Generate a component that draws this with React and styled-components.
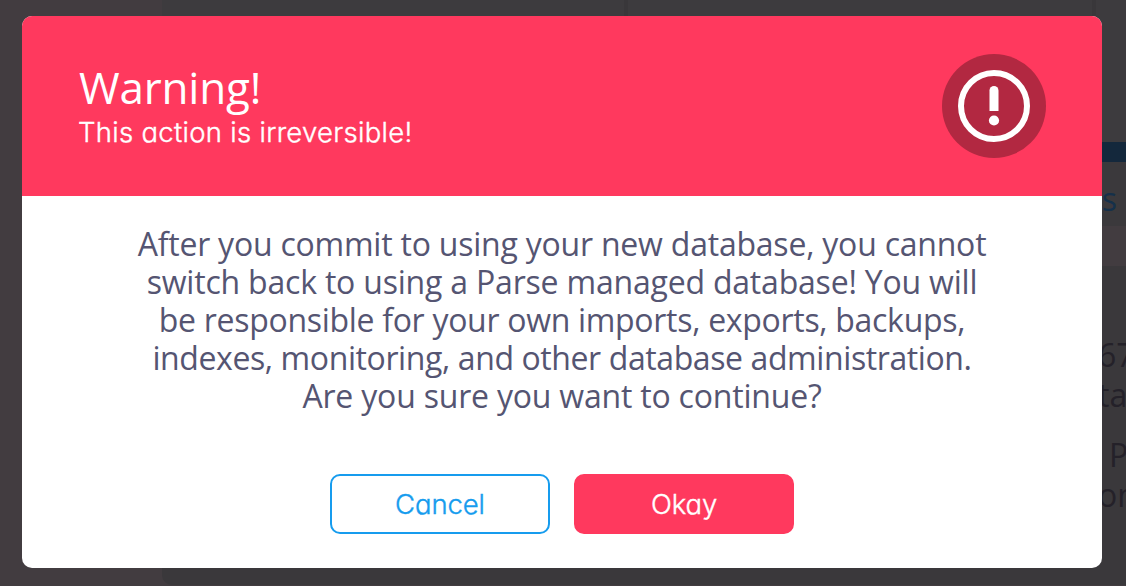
import React from "react";
import styled, { createGlobalStyle } from "styled-components";

const GlobalStyle = createGlobalStyle`
  * { box-sizing: border-box; }
  body { margin: 0; overflow: hidden; }
`;

const Screen = styled.div`
  position: relative;
  width: 1126px;
  height: 586px;
  overflow: hidden;
  font-family: "Open Sans", "Noto Sans", sans-serif;
`;

const Page = styled.div`
  display: flex;
  height: 100%;
  background: #423c40;
`;

const Sidebar = styled.div`
  flex: 0 0 162px;
`;

const Main = styled.div`
  flex: 1;
  display: flex;
  flex-direction: column;
  height: 585px;
  background: #3a383b;
  border-bottom-left-radius: 10px;
  overflow: hidden;
`;

const Columns = styled.div`
  display: flex;
  flex: 0 0 142px;
  background: #3d3b3e;
`;

const Column = styled.div`
  width: ${(p) => p.$width}px;
  border-right: 4px solid #39373a;
`;

const Accent = styled.div`
  flex: 0 0 20px;
  background: #14283c;
`;

const Tab = styled.div`
  flex: 0 0 64px;
  padding: 15px 9px 0 0;
  text-align: right;
  font-size: 32px;
  line-height: 44px;
  color: #15304a;
  background: #3b393c;
`;

const Strip = styled.div`
  flex: 0 0 40px;
  background: #423c40;
`;

const Details = styled.div`
  padding: 69px 0 0 936px;
  font-size: 32px;
  line-height: 40px;
  color: #242129;
  white-space: nowrap;
`;

const Detail = styled.div`
  padding-left: ${(p) => p.$indent || 0}px;
  margin-top: ${(p) => p.$gap || 0}px;
`;

const Dialog = styled.div`
  position: absolute;
  top: 16px;
  left: 22px;
  display: flex;
  flex-direction: column;
  width: 1080px;
  height: 552px;
  border-radius: 10px;
  background: #fff;
  overflow: hidden;
`;

const Header = styled.header`
  display: flex;
  align-items: center;
  justify-content: space-between;
  flex: 0 0 180px;
  padding: 0 56px;
  background: #ff395e;
  color: #fff;
`;

const Title = styled.h1`
  margin: 0;
  padding: 0 0 5px 1px;
  font-size: 44px;
  font-weight: 400;
  line-height: 47px;
  letter-spacing: -0.2px;
`;

const Subtitle = styled.p`
  margin: 0;
  font-family: Inter, sans-serif;
  font-feature-settings: "cv11";
  font-size: 27.5px;
  font-weight: 300;
  line-height: 32px;
  letter-spacing: 0.29px;
  -webkit-text-stroke: 0.4px currentColor;
`;

const Badge = styled.div`
  display: flex;
  align-items: center;
  justify-content: center;
  width: 104px;
  height: 104px;
  border-radius: 50%;
  background: #b22841;
`;

const Message = styled.div`
  padding-top: 29px;
  color: #555572;
  font-size: 32px;
  line-height: 38px;
  text-align: center;
  white-space: nowrap;
`;

const Line = styled.div`
  letter-spacing: ${(p) => p.$track}px;
`;

const Actions = styled.div`
  display: flex;
  justify-content: center;
  gap: 24px;
  margin-top: 59px;
`;

const Button = styled.button`
  width: 220px;
  height: 60px;
  padding: 0;
  border: 2px solid ${(p) => (p.$primary ? "#ff395e" : "#169cee")};
  border-radius: 10px;
  background: ${(p) => (p.$primary ? "#ff395e" : "#fff")};
  color: ${(p) => (p.$primary ? "#fff" : "#169cee")};
  font-family: Inter, sans-serif;
  font-feature-settings: "cv11";
  font-size: 27.5px;
  font-weight: 300;
  letter-spacing: -0.1px;
  -webkit-text-stroke: 0.4px currentColor;
`;

const lines = [
  ["After you commit to using your new database, you cannot", -0.22],
  ["switch back to using a Parse managed database! You will", -0.2],
  ["be responsible for your own imports, exports, backups,", -0.3],
  ["indexes, monitoring, and other database administration.", -0.4],
  ["Are you sure you want to continue?", -0.2],
];

export default function App() {
  return (
    <Screen>
      <GlobalStyle />
      <Page>
        <Sidebar />
        <Main>
          <Columns>
            <Column $width={466} />
            <Column $width={468} />
          </Columns>
          <Accent />
          <Tab>s</Tab>
          <Strip />
          <Details>
            <Detail>67</Detail>
            <Detail>ta</Detail>
            <Detail $gap={20} $indent={11}>P</Detail>
            <Detail>on</Detail>
          </Details>
        </Main>
      </Page>
      <Dialog role="dialog">
        <Header>
          <div>
            <Title>Warning!</Title>
            <Subtitle>This action is irreversible!</Subtitle>
          </div>
          <Badge>
            <svg width="72" height="72" viewBox="0 0 72 72" fill="#fff">
              <circle cx="36" cy="36" r="33" fill="none" stroke="#fff" strokeWidth="6" />
              <path d="M31.5 41V20.5a4.5 4.5 0 0 1 9 0V41z" />
              <circle cx="36" cy="50.5" r="5.1" />
            </svg>
          </Badge>
        </Header>
        <Message>
          {lines.map(([text, track]) => (
            <Line key={text} $track={track}>{text}</Line>
          ))}
        </Message>
        <Actions>
          <Button>Cancel</Button>
          <Button $primary>Okay</Button>
        </Actions>
      </Dialog>
    </Screen>
  );
}
